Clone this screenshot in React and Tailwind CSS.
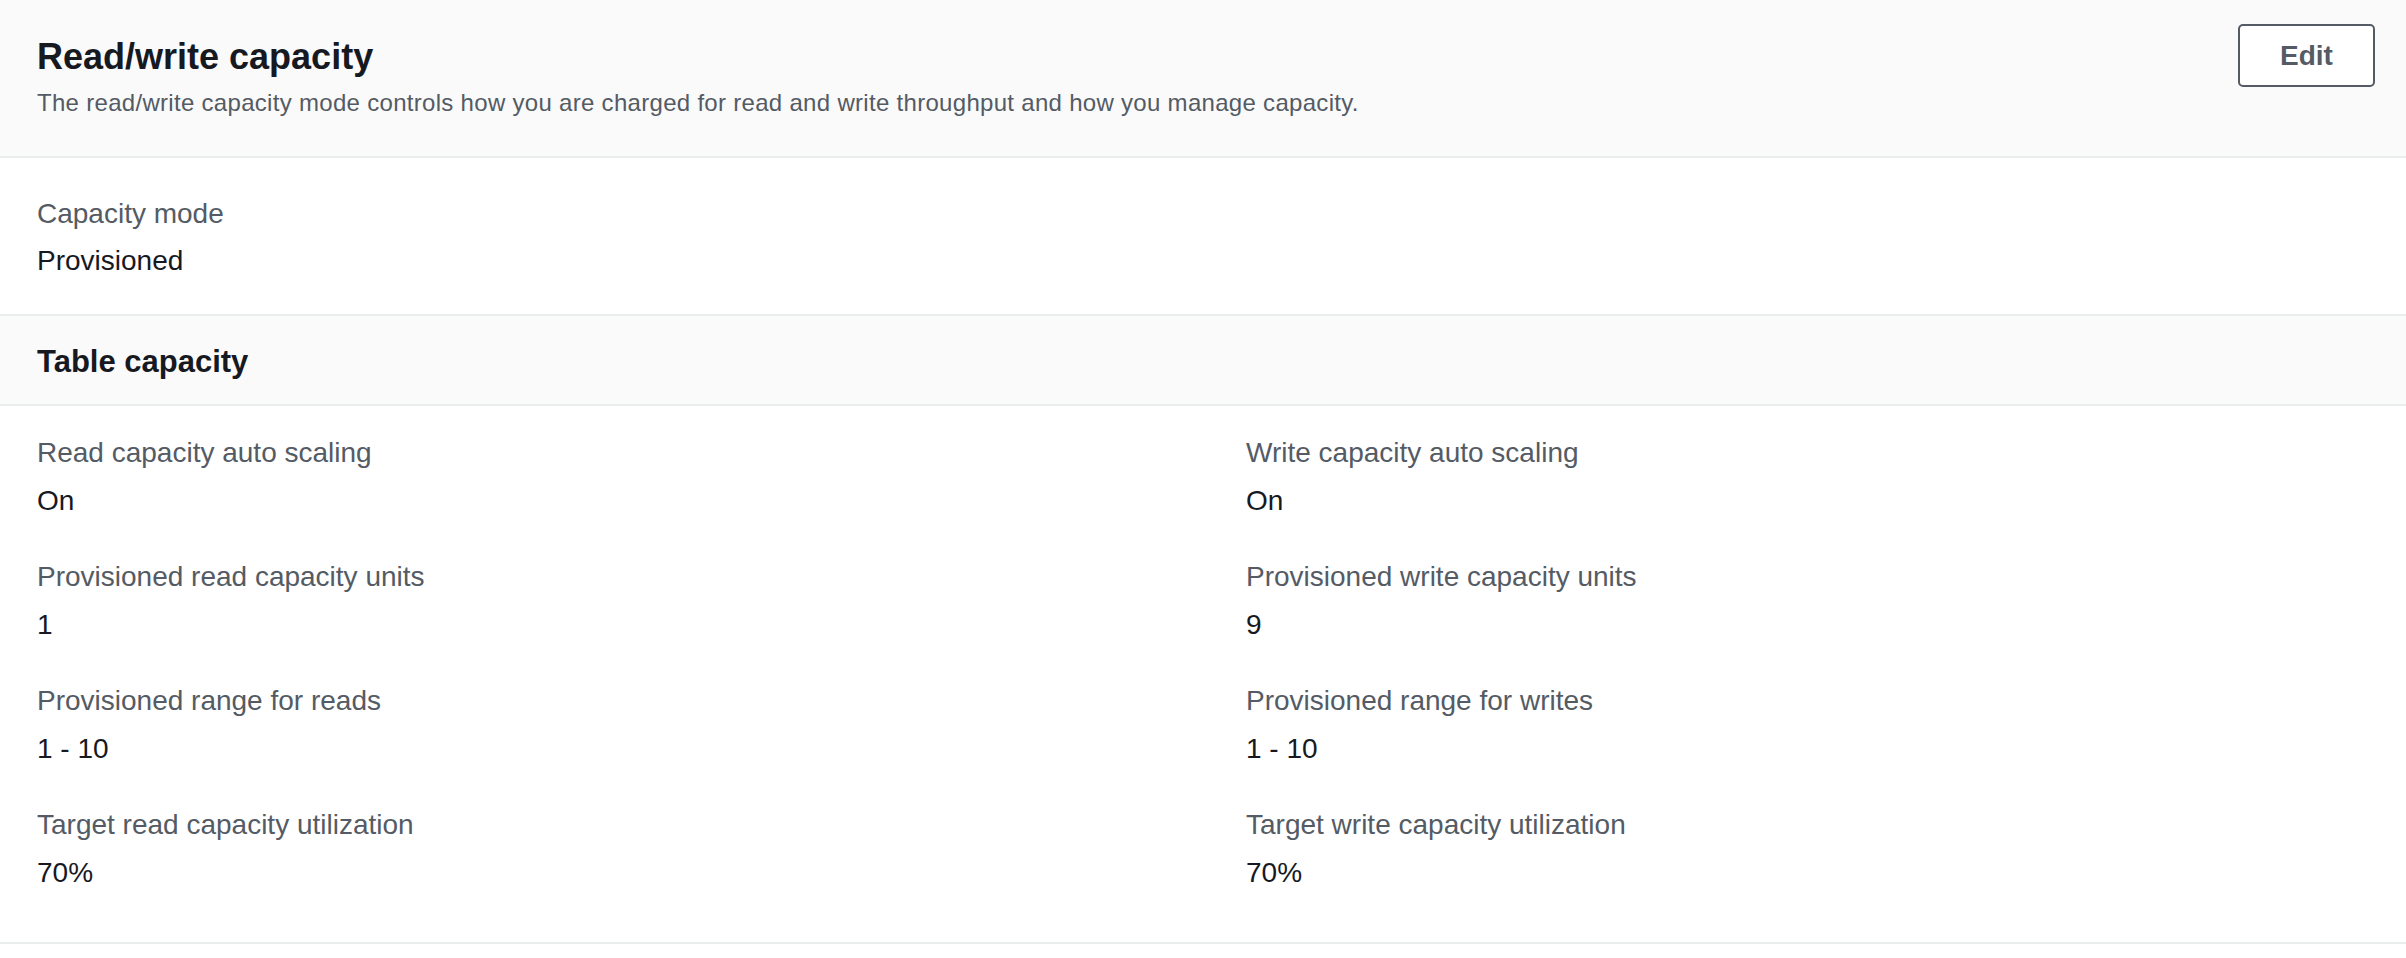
import React from 'react';

const rows = [
  ['Read capacity auto scaling', 'On', 'Write capacity auto scaling', 'On'],
  ['Provisioned read capacity units', '1', 'Provisioned write capacity units', '9'],
  ['Provisioned range for reads', '1 - 10', 'Provisioned range for writes', '1 - 10'],
  ['Target read capacity utilization', '70%', 'Target write capacity utilization', '70%'],
];

const Field = ({ label, value }) => (
  <div className="flex flex-col gap-[8px]">
    <div className="text-[28px] leading-[40px] text-[#545b64]">{label}</div>
    <div className="text-[28px] leading-[40px] text-[#16191f]">{value}</div>
  </div>
);

const App = () => {
  return (
    <div className="w-[2406px] bg-white font-['Liberation_Sans',Arial,sans-serif]">
      {/* Header */}
      <div className="flex justify-between bg-[#fafafa] border-b-2 border-[#eaeded] pl-[37px] pr-[31px]">
        <div className="pt-[35px] pb-[37px]">
          <h2 className="text-[36px] leading-[44px] font-bold text-[#16191f]">Read/write capacity</h2>
          <p className="mt-[8px] text-[24px] leading-[32px] tracking-[0.3px] text-[#545b64]">
            The read/write capacity mode controls how you are charged for read and write throughput and how you manage capacity.
          </p>
        </div>
        <div className="pt-[24px]">
          <button className="h-[63px] w-[137px] rounded-[5px] border-2 border-[#545b64] bg-white text-[28px] font-bold text-[#545b64]">
            Edit
          </button>
        </div>
      </div>

      {/* Capacity mode */}
      <div className="border-b-2 border-[#eaeded] px-[37px] pt-[36px] pb-[33px]">
        <div className="flex flex-col gap-[7px]">
          <div className="text-[28px] leading-[40px] text-[#545b64]">Capacity mode</div>
          <div className="text-[28px] leading-[40px] text-[#16191f]">Provisioned</div>
        </div>
      </div>

      {/* Table capacity */}
      <div className="bg-[#fafafa] border-b-2 border-[#eaeded] px-[37px] pt-[26px] pb-[22px]">
        <h3 className="text-[31px] leading-[40px] font-bold text-[#16191f]">Table capacity</h3>
      </div>

      <div className="border-b-2 border-[#eaeded] px-[37px] pt-[27px] pb-[49px]">
        <div className="grid grid-cols-[1209px_1fr] gap-y-[36px]">
          {rows.map(([l1, v1, l2, v2]) => (
            <React.Fragment key={l1}>
              <Field label={l1} value={v1} />
              <Field label={l2} value={v2} />
            </React.Fragment>
          ))}
        </div>
      </div>
    </div>
  );
};

export default App;
